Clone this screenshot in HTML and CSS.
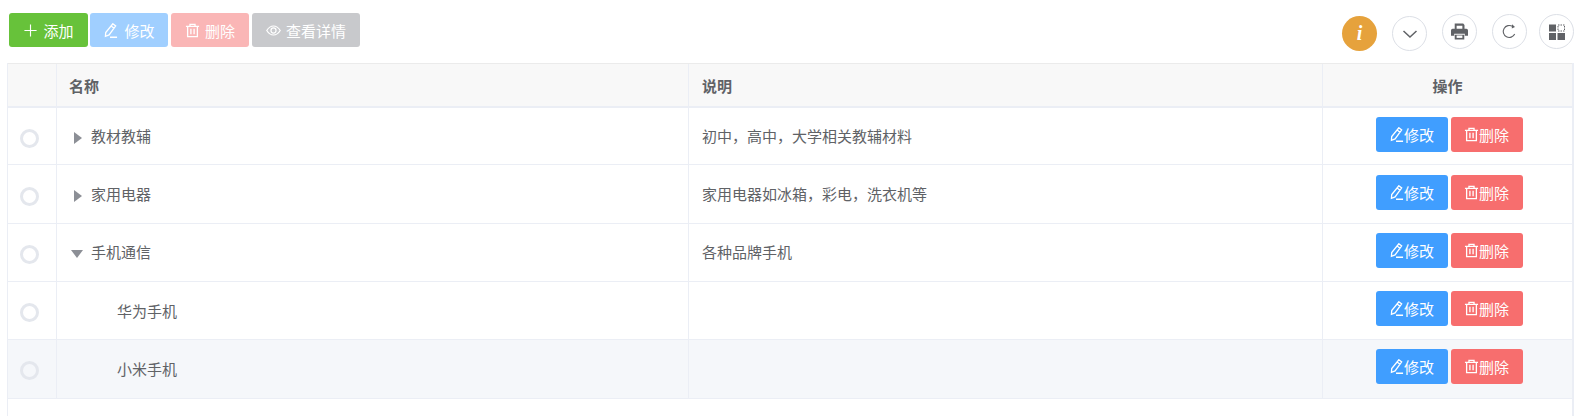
FILE: index.html
```html
<!DOCTYPE html>
<html lang="zh-CN">
<head>
  <meta charset="UTF-8" />
  <title>分类管理</title>
  <link rel="stylesheet" href="styles.css">
</head>
<body>
  <svg class="defs" width="0" height="0">
    <symbol id="i-edit" viewBox="0 0 16 16">
      <path d="M10.500.8l3 2.300-7 9.600-3.900 1.500.3-4zM8.700 3.200l3 2.300M7.500 15.200h7.500" fill="none" stroke="currentColor" stroke-width="1.400"/>
    </symbol>
    <symbol id="i-trash" viewBox="0 0 16 16">
      <path d="M1 3.500h14M5.300 3.500v-2h5.400v2M2.800 3.500v11h10.400v-11M6.300 6.200v5.800M9.700 6.200v5.800" fill="none" stroke="currentColor" stroke-width="1.400"/>
    </symbol>
    <symbol id="i-eye" viewBox="0 0 16 16">
      <path d="M.8 8c2-3.200 4.400-4.800 7.200-4.800s5.200 1.600 7.200 4.800c-2 3.200-4.400 4.800-7.200 4.800S2.800 11.200.8 8z" fill="none" stroke="currentColor" stroke-width="1.300"/>
      <circle cx="8" cy="8" r="2.700" fill="none" stroke="currentColor" stroke-width="1.300"/>
    </symbol>
  </svg>

  <div class="toolbar">
    <div class="actions">
      <button class="btn btn-add">
        <svg class="ico" viewBox="0 0 16 16"><path d="M8 1.500v13M1.500 8h13" stroke="currentColor" stroke-width="1.200"/></svg>
        添加
      </button>
      <button class="btn btn-edit off"><svg class="ico"><use href="#i-edit"/></svg>修改</button>
      <button class="btn btn-del off"><svg class="ico"><use href="#i-trash"/></svg>删除</button>
      <button class="btn btn-view"><svg class="ico"><use href="#i-eye"/></svg>查看详情</button>
    </div>
    <div class="tools">
      <span class="round info low">i</span>
      <span class="round low">
        <svg width="16" height="16" viewBox="0 0 16 16"><path d="M1.500 5l6.500 6 6.500-6" fill="none" stroke="#606266" stroke-width="1.500"/></svg>
      </span>
      <span class="round">
        <svg width="17" height="17" viewBox="0 0 16 16"><path d="M3.500 .5h8l1.200 1.300V6h-2V2.500H5.300V6h-1.800zM1.500 5.500h13A1.500 1.500 0 0 1 16 7v5h-3v-2H3v2H0V7a1.500 1.500 0 0 1 1.500-1.500zM3.500 11h9v4.500h-9z" fill="#606266"/><path d="M5.300 11.800h5.400v2.200H5.300z" fill="#fff"/></svg>
      </span>
      <span class="round">
        <svg width="15" height="15" viewBox="0 0 15 15"><path d="M12.700 10a6 6 0 1 1-2.200-7.600" fill="none" stroke="#606266" stroke-width="1.100"/><path d="M10 .3l3 2.600-3.200 1.600z" fill="#606266"/></svg>
      </span>
      <span class="round">
        <svg width="16" height="16" viewBox="0 0 16 16"><path d="M0 .5h7v7H0zM0 9h7v7H0zM8.500 9h7.500v7H8.500z" fill="#606266"/><path d="M9 1h6.500v6H9z" fill="none" stroke="#606266" stroke-dasharray="1.500 1"/></svg>
      </span>
    </div>
  </div>

  <div class="table-wrap">
    <table class="grid">
      <colgroup>
        <col class="c-check"><col class="c-name"><col class="c-desc"><col class="c-op">
      </colgroup>
      <thead>
        <tr><th></th><th>名称</th><th>说明</th><th class="center">操作</th></tr>
      </thead>
      <tbody>
        <tr>
          <td class="center"><span class="radio"></span></td>
          <td><span class="arrow right"></span>教材教辅</td>
          <td>初中，高中，大学相关教辅材料</td>
          <td class="center ops"><button class="mini m-edit"><svg class="ico"><use href="#i-edit"/></svg>修改</button><button class="mini m-del"><svg class="ico"><use href="#i-trash"/></svg>删除</button></td>
        </tr>
        <tr>
          <td class="center"><span class="radio"></span></td>
          <td><span class="arrow right"></span>家用电器</td>
          <td>家用电器如冰箱，彩电，洗衣机等</td>
          <td class="center ops"><button class="mini m-edit"><svg class="ico"><use href="#i-edit"/></svg>修改</button><button class="mini m-del"><svg class="ico"><use href="#i-trash"/></svg>删除</button></td>
        </tr>
        <tr>
          <td class="center"><span class="radio"></span></td>
          <td><span class="arrow down"></span>手机通信</td>
          <td>各种品牌手机</td>
          <td class="center ops"><button class="mini m-edit"><svg class="ico"><use href="#i-edit"/></svg>修改</button><button class="mini m-del"><svg class="ico"><use href="#i-trash"/></svg>删除</button></td>
        </tr>
        <tr>
          <td class="center"><span class="radio"></span></td>
          <td class="child">华为手机</td>
          <td></td>
          <td class="center ops"><button class="mini m-edit"><svg class="ico"><use href="#i-edit"/></svg>修改</button><button class="mini m-del"><svg class="ico"><use href="#i-trash"/></svg>删除</button></td>
        </tr>
        <tr class="hover">
          <td class="center"><span class="radio"></span></td>
          <td class="child">小米手机</td>
          <td></td>
          <td class="center ops"><button class="mini m-edit"><svg class="ico"><use href="#i-edit"/></svg>修改</button><button class="mini m-del"><svg class="ico"><use href="#i-trash"/></svg>删除</button></td>
        </tr>
      </tbody>
    </table>
  </div>
</body>
</html>
```

FILE: styles.css
```css
* {
  box-sizing: border-box;
}
body {
  margin: 0;
  padding: 13px 12px 0 7px;
  background: #fff;
  font-family: "Noto Sans CJK SC", "Liberation Sans", sans-serif;
  font-size: 15px;
  color: #606266;
  overflow: hidden;
}
.defs {
  position: absolute;
}
.toolbar {
  display: flex;
  justify-content: space-between;
  height: 50px;
}
.actions {
  display: flex;
  align-items: flex-start;
  padding-left: 2px;
  gap: 3px;
}
.btn {
  display: flex;
  align-items: center;
  justify-content: center;
  gap: 5px;
  height: 34px;
  width: 78px;
  padding: 0;
  border: 0;
  border-radius: 3px;
  color: #fff;
  font: inherit;
}
.btn-add {
  width: 79px;
  margin-right: -1px;
  background: #67c23a;
}
.btn-edit {
  gap: 6px;
  background: #a0cfff;
}
.btn-del {
  background: #fab6b6;
}
.btn-view {
  width: 108px;
  background: #c8c9cc;
}
.ico {
  width: 15px;
  height: 15px;
  flex: none;
}
.tools {
  display: flex;
  align-items: flex-start;
  gap: 15px;
}
.round {
  display: flex;
  align-items: center;
  justify-content: center;
  width: 35px;
  height: 35px;
  margin-top: 1px;
  border: 1px solid #dcdfe6;
  border-radius: 50%;
  background: #fff;
}
.tools .round:last-child {
  margin-left: -3px;
}
.low {
  margin-top: 3px;
}
.info {
  border: 0;
  background: #e6a23c;
  color: #fff;
  font-family: "Liberation Serif", serif;
  font-size: 20px;
  font-weight: bold;
  font-style: italic;
}
.table-wrap {
  width: 1567px;
  height: 353px;
  border-left: 1px solid #ebeef5;
  border-right: 2px solid #ebeef5;
}
.grid {
  width: 100%;
  table-layout: fixed;
  border-collapse: separate;
  border-spacing: 0;
  border-top: 1px solid #ebebeb;
}
.c-check {
  width: 49px;
}
.c-name {
  width: 632px;
}
.c-desc {
  width: 634px;
}
th {
  height: 44px;
  padding: 0 12px;
  background: #f8f8f8;
  border-bottom: 2px solid #ebeef5;
  border-right: 1px solid #ebeef5;
  text-align: left;
  font-size: 15px;
  font-weight: bold;
}
td {
  height: 58.300px;
  padding: 0 13px 1px;
  border-bottom: 1px solid #ebeef5;
  border-right: 1px solid #ebeef5;
}
tbody tr:first-child td {
  height: 57.400px;
}
th + th + th {
  padding-left: 13px;
}
th:last-child,
td:last-child {
  border-right: 0;
}
.grid .center {
  text-align: center;
  padding: 0;
}
.grid .ops {
  padding: 0 0 4px 3px;
}
.hover td {
  background: #f5f7fa;
}
.radio {
  display: inline-block;
  width: 19px;
  height: 19px;
  margin: 8px 5px 0 0;
  border: 3px solid #e4e7ed;
  border-radius: 50%;
  background: #fff;
}
.hover .radio {
  background: #f5f7fa;
}
.arrow {
  display: inline-block;
  vertical-align: middle;
}
.arrow.right {
  margin-left: 4px;
  margin-right: 9px;
  border-left: 8px solid #8c8f96;
  border-top: 6px solid transparent;
  border-bottom: 6px solid transparent;
}
.arrow.down {
  margin-left: 1px;
  margin-right: 8px;
  border-top: 8px solid #8c8f96;
  border-left: 6px solid transparent;
  border-right: 6px solid transparent;
}
.child {
  padding-left: 60px;
}
.mini {
  display: inline-flex;
  align-items: center;
  justify-content: center;
  vertical-align: middle;
  width: 72px;
  height: 35px;
  padding: 0;
  border: 0;
  border-radius: 3px;
  color: #fff;
  font: inherit;
}
.mini + .mini {
  margin-left: 3px;
}
.m-edit {
  background: #409eff;
}
.m-del {
  background: #f76e6e;
}
```
